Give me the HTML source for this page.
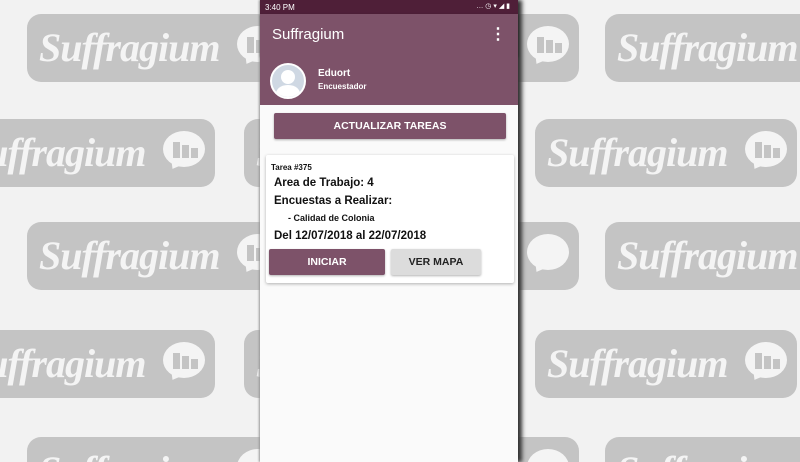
<!DOCTYPE html>
<html style="overflow:hidden;width:800px;height:462px"><head><meta charset="utf-8"><style>
*{margin:0;padding:0;box-sizing:border-box}
body{width:800px;height:462px;overflow:hidden;background:#f2f2f2;position:relative;font-family:"Liberation Sans",sans-serif}
.t{position:absolute;width:262px;height:68px;background:#c4c4c4;border-radius:14px;overflow:hidden}
.t span{position:absolute;left:12px;top:10px;font-family:"Liberation Serif",serif;font-style:italic;font-weight:bold;font-size:40px;color:#f4f4f4;letter-spacing:-1px}
.b{position:absolute;right:10px;top:12px;width:42px;height:36px;background:#f4f4f4;border-radius:50%}
.b:after{content:"";position:absolute;left:4px;bottom:-8px;border:6px solid transparent;border-top:8px solid #f4f4f4;transform:rotate(30deg)}
.b i{position:absolute;bottom:9px;width:7px;background:#c4c4c4}
.ph{position:absolute;left:260px;top:0;width:258px;height:462px;background:#fafafa;box-shadow:4px 0 4px #333,-1px 0 2px #999}
.sb{height:14px;background:#4f1f38;color:#fff;font-size:8px;padding:3px 5px}
.ab{height:42px;background:#7d5269;color:#fff;font-size:15px;padding:12px 12px;position:relative;box-shadow:0 1px 2px rgba(0,0,0,.4)}
.hd{height:49px;background:#7d5269;position:relative}
.av{position:absolute;left:10px;top:7px;width:36px;height:36px;border-radius:50%;background:#cfd8e3;border:2px solid #fff;overflow:hidden}
.btn{position:absolute;background:#7d5269;color:#fff;font-size:10.5px;font-weight:bold;text-align:center;border-radius:2px;box-shadow:0 1px 2px rgba(0,0,0,.3)}
.card{position:absolute;left:6px;top:155px;width:248px;height:128px;background:#fff;border-radius:2px;box-shadow:0 1px 3px rgba(0,0,0,.3)}
.card div{position:absolute;color:#111;font-weight:bold}
</style></head><body>
<div class="t" style="left:27px;top:14px"><span>Suffragium</span><div class="b"><i style="left:10px;height:16px"></i><i style="left:19px;height:13px"></i><i style="left:28px;height:10px"></i></div></div>
<div class="t" style="left:317px;top:14px"><span>Suffragium</span><div class="b"><i style="left:10px;height:16px"></i><i style="left:19px;height:13px"></i><i style="left:28px;height:10px"></i></div></div>
<div class="t" style="left:605px;top:14px"><span>Suffragium</span><div class="b"><i style="left:10px;height:16px"></i><i style="left:19px;height:13px"></i><i style="left:28px;height:10px"></i></div></div>
<div class="t" style="left:-47px;top:119px"><span>Suffragium</span><div class="b"><i style="left:10px;height:16px"></i><i style="left:19px;height:13px"></i><i style="left:28px;height:10px"></i></div></div>
<div class="t" style="left:244px;top:119px"><span>Suffragium</span><div class="b"></div></div>
<div class="t" style="left:535px;top:119px"><span>Suffragium</span><div class="b"><i style="left:10px;height:16px"></i><i style="left:19px;height:13px"></i><i style="left:28px;height:10px"></i></div></div>
<div class="t" style="left:27px;top:222px"><span>Suffragium</span><div class="b"><i style="left:10px;height:16px"></i><i style="left:19px;height:13px"></i><i style="left:28px;height:10px"></i></div></div>
<div class="t" style="left:317px;top:222px"><span>Suffragium</span><div class="b"></div></div>
<div class="t" style="left:605px;top:222px"><span>Suffragium</span><div class="b"><i style="left:10px;height:16px"></i><i style="left:19px;height:13px"></i><i style="left:28px;height:10px"></i></div></div>
<div class="t" style="left:-47px;top:330px"><span>Suffragium</span><div class="b"><i style="left:10px;height:16px"></i><i style="left:19px;height:13px"></i><i style="left:28px;height:10px"></i></div></div>
<div class="t" style="left:244px;top:330px"><span>Suffragium</span><div class="b"></div></div>
<div class="t" style="left:535px;top:330px"><span>Suffragium</span><div class="b"><i style="left:10px;height:16px"></i><i style="left:19px;height:13px"></i><i style="left:28px;height:10px"></i></div></div>
<div class="t" style="left:27px;top:437px;height:25px;border-radius:14px 14px 0 0"><span>Suffragium</span><div class="b"></div></div>
<div class="t" style="left:317px;top:437px;height:25px;border-radius:14px 14px 0 0"><span>Suffragium</span><div class="b"></div></div>
<div class="t" style="left:605px;top:437px;height:25px;border-radius:14px 14px 0 0"><span>Suffragium</span><div class="b"></div></div>

<div class="ph">
<div class="sb">3:40 PM<span style="position:absolute;right:8px;top:2px;font-size:7px">… ◷ ▾ ◢ ▮</span></div>
<div class="ab">Suffragium<span style="position:absolute;right:12px;top:10px;font-size:16px;font-weight:bold">⋮</span></div>
<div class="hd"><div class="av"><svg width="32" height="32" viewBox="0 0 32 32"><circle cx="16" cy="12" r="7" fill="#fff"/><path d="M3 32 Q4 20 16 20 Q28 20 29 32Z" fill="#fff"/></svg></div>
<div style="position:absolute;left:58px;top:12px;color:#fff;font-size:10px;font-weight:bold">Eduort</div>
<div style="position:absolute;left:58px;top:26px;color:#fff;font-size:8px;font-weight:bold">Encuestador</div></div>
<div class="btn" style="left:14px;top:113px;width:232px;height:26px;line-height:26px">ACTUALIZAR TAREAS</div>
<div class="card">
<div style="left:5px;top:8px;font-size:8px">Tarea #375</div>
<div style="left:8px;top:22px;font-size:11.5px">Area de Trabajo: 4</div>
<div style="left:8px;top:40px;font-size:11.5px">Encuestas a Realizar:</div>
<div style="left:22px;top:58px;font-size:9px">- Calidad de Colonia</div>
<div style="left:8px;top:75px;font-size:11.5px">Del 12/07/2018 al 22/07/2018</div>
<div class="btn" style="left:3px;top:94px;width:116px;height:26px;line-height:26px;color:#fff">INICIAR</div>
<div class="btn" style="left:125px;top:94px;width:90px;height:26px;line-height:26px;background:#dcdcdc;color:#222">VER MAPA</div>
</div>
</div>
</body></html>
